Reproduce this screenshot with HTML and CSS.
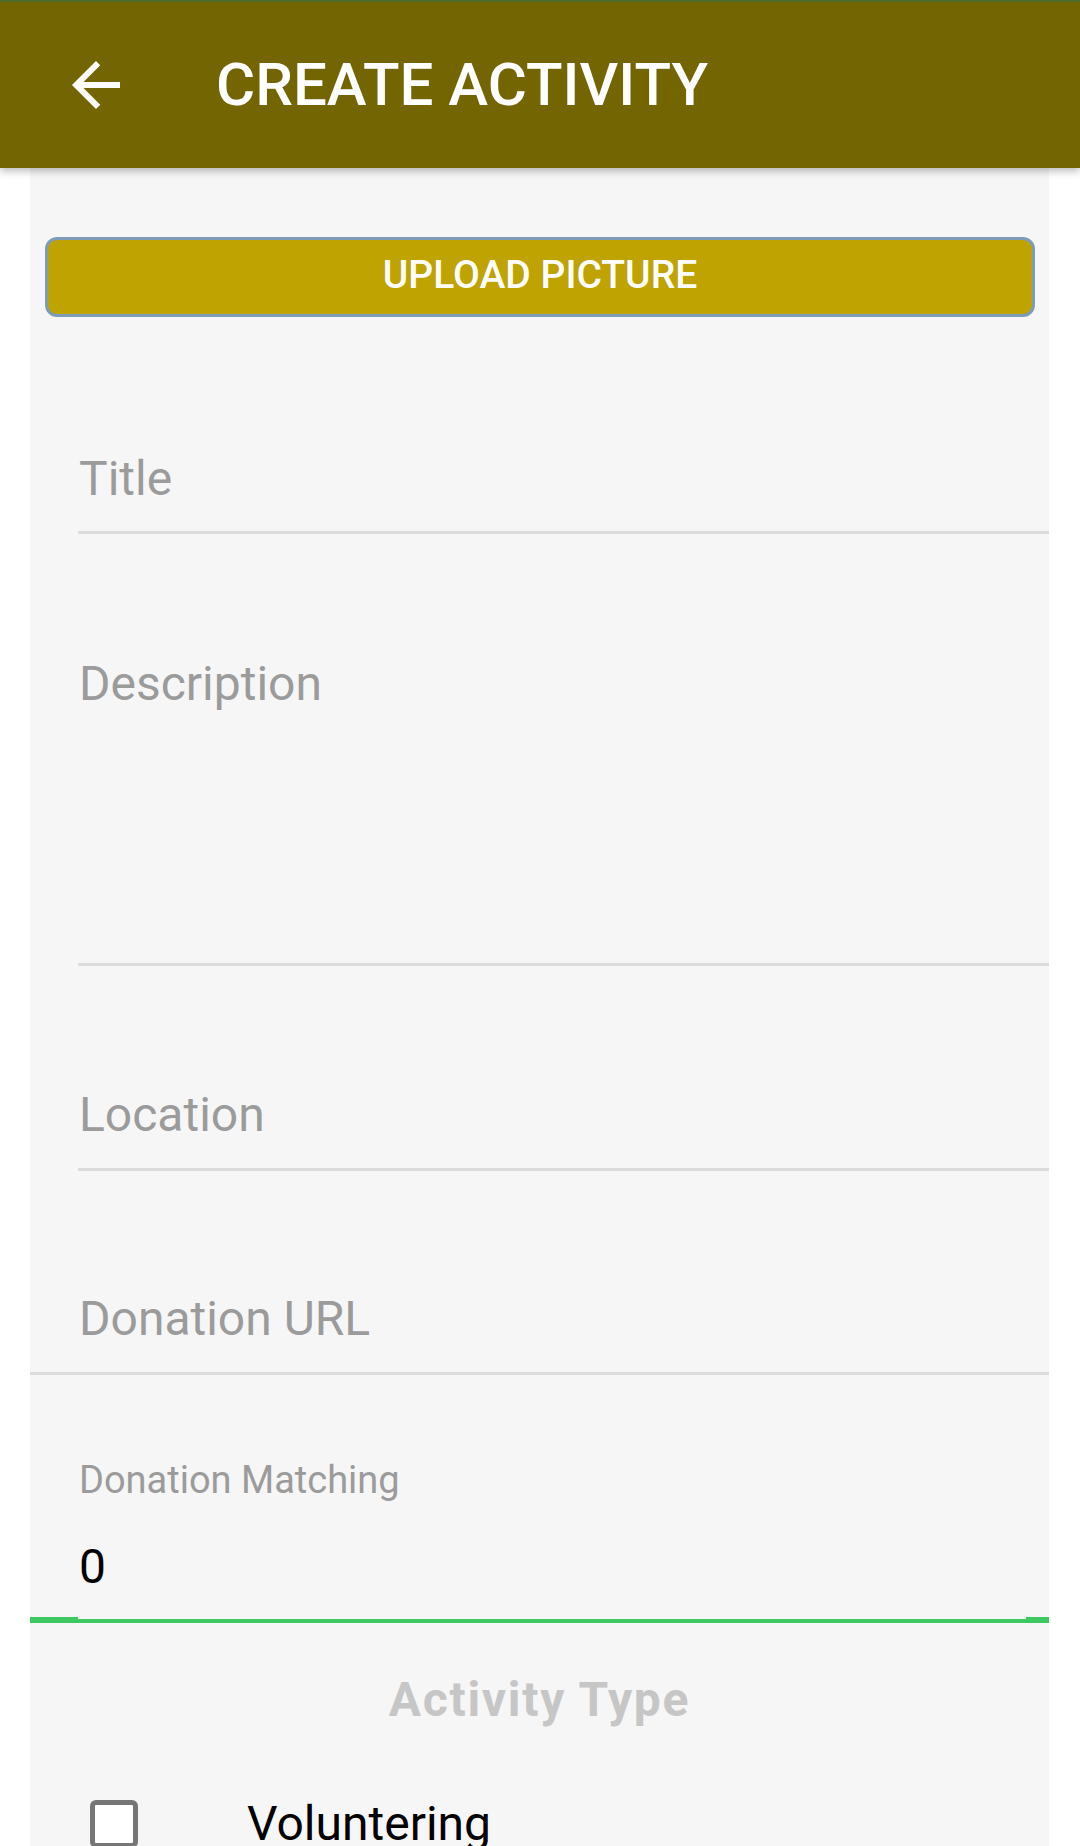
FILE: index.html
```html
<!DOCTYPE html>
<html>
<head>
<meta charset="utf-8">
<link rel="stylesheet" href="styles.css">
</head>
<body>
<header class="toolbar">
  <svg class="back" viewBox="0 0 24 24" width="72" height="72"><path fill="#ffffff" d="M20 11H7.83l5.59-5.59L12 4l-8 8 8 8 1.41-1.41L7.83 13H20v-2z"/></svg>
  <h1 class="toolbar-title">CREATE ACTIVITY</h1>
</header>
<main class="panel">
  <div class="upload">UPLOAD PICTURE</div>
  <div class="field field-title"><span class="hint">Title</span></div>
  <div class="field field-desc"><span class="hint">Description</span></div>
  <div class="field field-location"><span class="hint">Location</span></div>
  <div class="field field-url"><span class="hint">Donation URL</span></div>
  <div class="matching">
    <div class="matching-label">Donation Matching</div>
    <div class="matching-value">0</div>
  </div>
  <div class="activity-type">Activity Type</div>
  <div class="check-row">
    <span class="checkbox"></span>
    <span class="check-label">Voluntering</span>
  </div>
</main>
</body>
</html>
```
FILE: styles.css
```css
html, body {
  margin: 0;
  padding: 0;
  background: #ffffff;
  font-family: Roboto, "Noto Sans", sans-serif;
  height: 1846px;
  overflow: hidden;
}

.toolbar {
  position: relative;
  z-index: 2;
  box-sizing: border-box;
  height: 168px;
  background: #736502;
  border-top: 2px solid #4f6a2c;
  display: flex;
  align-items: center;
  box-shadow: 0 3px 8px rgba(0, 0, 0, 0.28);
}

.back {
  margin-left: 60px;
  flex: none;
}

.toolbar-title {
  margin: 0 0 0 84px;
  font-size: 60px;
  font-weight: 500;
  color: #ffffff;
  line-height: 70px;
}

.panel {
  margin: 0 31px 0 30px;
  background: #f6f6f6;
  padding-top: 69px;
  min-height: 1700px;
}

.upload {
  box-sizing: border-box;
  margin: 0 14px 0 15px;
  height: 80px;
  padding-bottom: 4px;
  border: 3px solid #7e9cb8;
  border-radius: 12px;
  background: #bfa300;
  color: #ffffff;
  font-size: 39px;
  font-weight: 500;
  display: flex;
  align-items: center;
  justify-content: center;
}

.field {
  margin-left: 48px;
  padding-left: 1px;
  line-height: 56px;
  font-size: 48px;
  padding-bottom: 24px;
  border-bottom: 3px solid #dcdcdc;
}

.hint {
  color: #9b9b9b;
}

.field-title {
  margin-top: 134px;
}

.field-desc {
  margin-top: 122px;
  padding-bottom: 251px;
}

.field-location {
  margin-top: 121px;
  padding-bottom: 25px;
}

.field-url {
  margin-top: 120px;
  margin-left: 0;
  padding-left: 49px;
  padding-bottom: 25px;
}

.matching {
  position: relative;
  margin-top: 83px;
  padding-left: 49px;
  padding-bottom: 24px;
  border-bottom: 4px solid #3ec862;
}

.matching::before,
.matching::after {
  content: "";
  position: absolute;
  bottom: -4px;
  height: 6px;
  background: #3ec862;
}

.matching::before {
  left: 0;
  width: 48px;
}

.matching::after {
  right: 0;
  width: 23px;
}

.matching-label {
  font-size: 38px;
  line-height: 44px;
  color: #9b9b9b;
}

.matching-value {
  margin-top: 37px;
  font-size: 48px;
  line-height: 56px;
  color: #000000;
}

.activity-type {
  margin-top: 49px;
  font-size: 48px;
  line-height: 56px;
  font-weight: 700;
  letter-spacing: 1.7px;
  color: #c6c6c6;
  text-align: center;
}

.check-row {
  margin-top: 68px;
  display: flex;
  align-items: flex-start;
}

.checkbox {
  box-sizing: border-box;
  margin: 4px 0 0 60px;
  width: 48px;
  height: 48px;
  border: 5px solid #767676;
  border-radius: 6px;
  background: #ffffff;
  flex: none;
}

.check-label {
  margin-left: 109px;
  font-size: 48px;
  line-height: 56px;
  color: #000000;
}
```
